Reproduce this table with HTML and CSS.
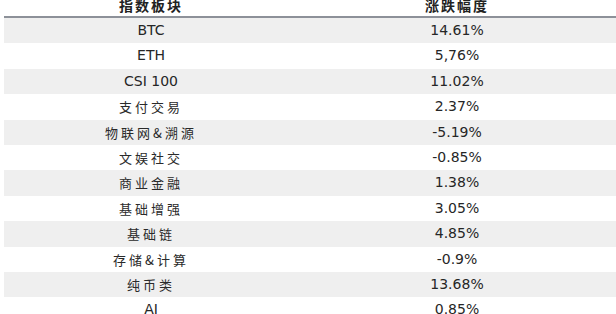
FILE: index.html
```html
<!DOCTYPE html>
<html lang="zh-CN">
<head>
    <meta charset="UTF-8">
    <meta name="viewport" content="width=device-width, initial-scale=1.0">
    <title>指数板块涨跌幅度</title>
    <link rel="stylesheet" href="styles.css">
</head>
<body>
<div class="table">
    <div class="head">
        <div class="cell">指数板块</div>
        <div class="cell right">涨跌幅度</div>
    </div>
    <div class="row shade">
        <div class="cell">BTC</div>
        <div class="cell right">14.61%</div>
    </div>
    <div class="row">
        <div class="cell">ETH</div>
        <div class="cell right">5,76%</div>
    </div>
    <div class="row shade">
        <div class="cell">CSI 100</div>
        <div class="cell right">11.02%</div>
    </div>
    <div class="row">
        <div class="cell cn">支付交易</div>
        <div class="cell right">2.37%</div>
    </div>
    <div class="row shade">
        <div class="cell cn">物联网&amp;溯源</div>
        <div class="cell right">-5.19%</div>
    </div>
    <div class="row">
        <div class="cell cn">文娱社交</div>
        <div class="cell right">-0.85%</div>
    </div>
    <div class="row shade">
        <div class="cell cn">商业金融</div>
        <div class="cell right">1.38%</div>
    </div>
    <div class="row">
        <div class="cell cn">基础增强</div>
        <div class="cell right">3.05%</div>
    </div>
    <div class="row shade">
        <div class="cell cn">基础链</div>
        <div class="cell right">4.85%</div>
    </div>
    <div class="row">
        <div class="cell cn">存储&amp;计算</div>
        <div class="cell right">-0.9%</div>
    </div>
    <div class="row shade">
        <div class="cell cn">纯币类</div>
        <div class="cell right">13.68%</div>
    </div>
    <div class="row">
        <div class="cell">AI</div>
        <div class="cell right">0.85%</div>
    </div>
</div>
</body>
</html>
```

FILE: styles.css
```css
body{
    margin: 0;
    background: #fff;
    font-family: "DejaVu Sans", "Noto Sans CJK SC", sans-serif;
    font-size: 14px;
    color: #262626;
}
.table{
    margin-left: 4px;
}
.head, .row{
    display: grid;
    grid-template-columns: 294px 1fr;
}
.head{
    height: 18px;
    border-bottom: 2px solid #8d9199;
    box-sizing: border-box;
}
.head .cell{
    line-height: 10px;
    font-family: "Noto Sans CJK SC", sans-serif;
    font-weight: 700;
    font-size: 14px;
    letter-spacing: 2px;
    color: #222;
}
.row{
    height: 25.4px;
}
.shade{
    background-color: #efefef;
}
.cell{
    text-align: center;
    line-height: 25.4px;
    white-space: nowrap;
}
.cn{
    font-family: "Noto Sans CJK SC", sans-serif;
    font-weight: 400;
    font-size: 13px;
    letter-spacing: 3px;
    color: #2a2a2a;
}
```
